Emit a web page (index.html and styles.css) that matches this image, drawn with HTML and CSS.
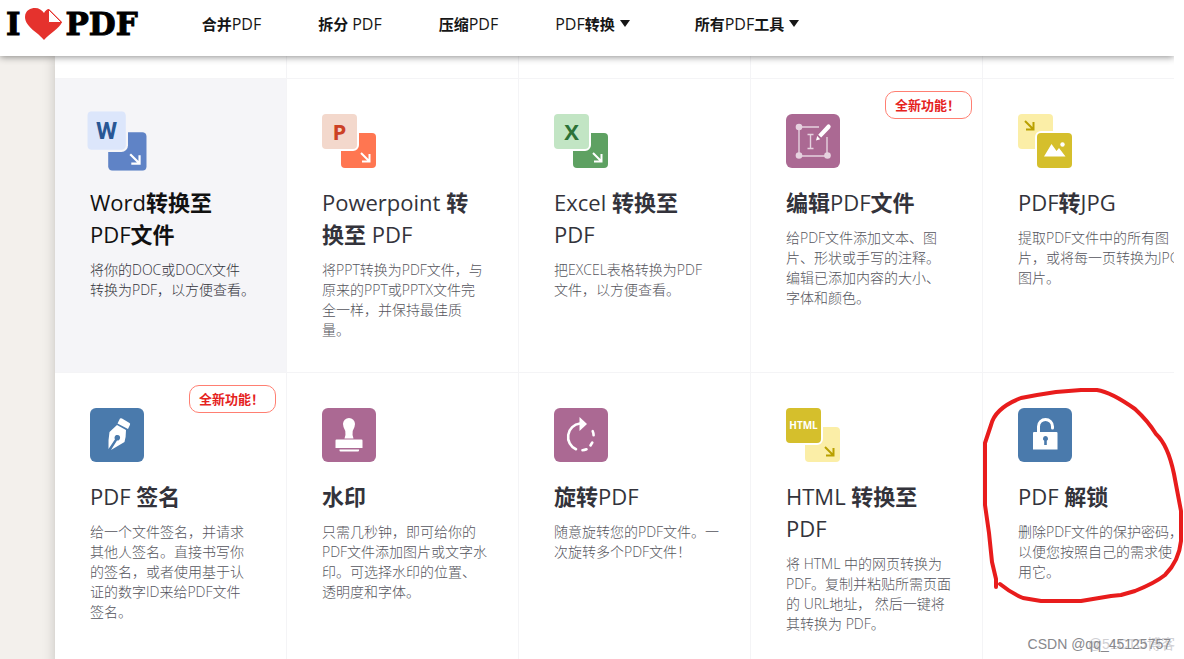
FILE: index.html
```html
<!DOCTYPE html>
<html lang="zh-CN">
<head>
<meta charset="utf-8">
<title>I love PDF</title>
<link rel="stylesheet" href="styles.css">
</head>
<body>
<div class="page">
  <header class="header">
    <a class="logo" href="#" aria-label="I love PDF">
      <span>I</span>
      <svg class="heart" viewBox="0 0 37 32" aria-hidden="true">
        <path fill="#e5322d" d="M19 32C14 25 0 19 0 9 0 2 6 0 10 0c4 0 7 2 9 5 1-2 3-4 5-4l13 13C35 20 24 26 19 32z"/>
        <path fill="#fff" stroke="#e5322d" d="M23.500 1.500 36.500 14.500h-13z"/>
      </svg>
      <span>PDF</span>
    </a>
    <nav class="nav">
      <a href="#">合并<span class="latin">PDF</span></a>
      <a href="#">拆分 <span class="latin">PDF</span></a>
      <a href="#">压缩<span class="latin">PDF</span></a>
      <button class="menu" type="button"><span><span class="latin">PDF</span>转换</span><i class="caret"></i></button>
      <button class="menu" type="button"><span>所有<span class="latin">PDF</span>工具</span><i class="caret"></i></button>
    </nav>
  </header>

  <main class="main">
    <div class="tools">
      <div class="previous"></div><div class="previous"></div><div class="previous"></div><div class="previous"></div><div class="previous"></div>

      <a class="card active" href="#">
        <svg class="icon" viewBox="0 0 54 54" aria-hidden="true">
          <rect x="19" y="19" width="35" height="35" rx="4" fill="#5f83c6"/>
          <rect class="cut" x="-2" y="-2" width="39" height="39" rx="6"/>
          <rect width="35" height="35" rx="4" fill="#dce6fb"/>
          <text class="letter narrow" x="17.500" y="25" fill="#285795">W</text>
          <path class="arrow" stroke="#fff" d="M39 39l8 8M47.500 40v7.500H40"/>
        </svg>
        <h2><span class="latin">Word</span>转换至<br><span class="latin">PDF</span>文件</h2>
        <p>将你的DOC或DOCX文件<br>转换为PDF，以方便查看。</p>
      </a>

      <a class="card" href="#">
        <svg class="icon" viewBox="0 0 54 54" aria-hidden="true">
          <rect x="19" y="19" width="35" height="35" rx="4" fill="#ff7651"/>
          <rect class="cut" x="-2" y="-2" width="39" height="39" rx="6"/>
          <rect width="35" height="35" rx="4" fill="#f3d8cc"/>
          <text class="letter" x="17.500" y="26" fill="#cc4125">P</text>
          <path class="arrow" stroke="#fff" d="M39 39l8 8M47.500 40v7.500H40"/>
        </svg>
        <h2><span class="latin">Powerpoint</span> 转<br>换至 <span class="latin">PDF</span></h2>
        <p>将PPT转换为PDF文件，与<br>原来的PPT或PPTX文件完<br>全一样，并保持最佳质<br>量。</p>
      </a>

      <a class="card" href="#">
        <svg class="icon" viewBox="0 0 54 54" aria-hidden="true">
          <rect x="19" y="19" width="35" height="35" rx="4" fill="#5ea162"/>
          <rect class="cut" x="-2" y="-2" width="39" height="39" rx="6"/>
          <rect width="35" height="35" rx="4" fill="#c2e5c4"/>
          <text class="letter" x="17.500" y="26" fill="#2c7237">X</text>
          <path class="arrow" stroke="#fff" d="M39 39l8 8M47.500 40v7.500H40"/>
        </svg>
        <h2><span class="latin">Excel</span> 转换至<br><span class="latin">PDF</span></h2>
        <p>把EXCEL表格转换为PDF<br>文件，以方便查看。</p>
      </a>

      <a class="card" href="#">
        <span class="badge">全新功能！</span>
        <svg class="icon" viewBox="0 0 54 54" aria-hidden="true">
          <rect width="54" height="54" rx="6" fill="#ab6993"/>
          <path fill="none" stroke="#e6d2df" stroke-width="1.400" d="M33 13H13v29h28V23"/>
          <g fill="#e6d2df"><circle cx="13" cy="13" r="3.300"/><circle cx="13" cy="41.500" r="3.300"/><circle cx="41.500" cy="41.500" r="3.300"/></g>
          <path fill="none" stroke="#e6d2df" stroke-width="1.400" d="M21.500 20.500h6M24.500 20.500v14M21.500 34.500h6"/>
          <path fill="#fff" d="M30 26.500l1.200-4.500 3 3.200zM32.200 20.700l8.700-9.500q1.500-1.600 3.100-.2 1.500 1.600.1 3.200l-8.900 9.400z"/>
        </svg>
        <h2>编辑<span class="latin">PDF</span>文件</h2>
        <p>给PDF文件添加文本、图<br>片、形状或手写的注释。<br>编辑已添加内容的大小、<br>字体和颜色。</p>
      </a>

      <a class="card" href="#">
        <svg class="icon" viewBox="0 0 54 54" aria-hidden="true">
          <rect width="35" height="35" rx="4" fill="#fbeea7"/>
          <rect class="cut" x="17" y="17" width="39" height="39" rx="6"/>
          <rect x="19" y="19" width="35" height="35" rx="4" fill="#d5bf2c"/>
          <path class="arrow" stroke="#b9a000" d="M7 7l8 8M15.500 8v7.500H8"/>
          <path fill="#fff" d="M26 42.500l7.500-12.500 5 7 2.500-3 6.500 8.500z"/><circle cx="44.500" cy="30.500" r="2.200" fill="#fff"/>
        </svg>
        <h2><span class="latin">PDF</span>转<span class="latin">JPG</span></h2>
        <p>提取PDF文件中的所有图<br>片，或将每一页转换为JPG<br>图片。</p>
      </a>

      <a class="card" href="#">
        <span class="badge">全新功能！</span>
        <svg class="icon" viewBox="0 0 54 54" aria-hidden="true">
          <rect width="54" height="54" rx="6" fill="#4a7aac"/>
          <path fill="#fff" d="M30 10.500q1-.6 2 0l7.500 4.500q1 .7.500 1.800L38 21 27.500 15.500z"/>
          <path fill="#fff" d="M27 17l9 5q0 7-1.500 12L21 42l6-9.500a2.800 2.800 0 1 0-2-1.200L18.500 41Q18 32 19.500 24z"/>
        </svg>
        <h2><span class="latin">PDF</span> 签名</h2>
        <p>给一个文件签名，并请求<br>其他人签名。直接书写你<br>的签名，或者使用基于认<br>证的数字ID来给PDF文件<br>签名。</p>
      </a>

      <a class="card" href="#">
        <svg class="icon" viewBox="0 0 54 54" aria-hidden="true">
          <rect width="54" height="54" rx="6" fill="#ab6993"/>
          <path fill="#fff" d="M22.500 30.500q1.500-4 .8-7.500-2.300-4-2.300-7a6 6 0 0 1 12 0q0 3-2.300 7-.7 3.500.8 7.500zM14.500 31.500h25q1 0 1 1V40h-27v-7.500q0-1 1-1zM17.500 41.500h19.500v1q0 1-1 1H18.500q-1 0-1-1z"/>
        </svg>
        <h2>水印</h2>
        <p>只需几秒钟，即可给你的<br>PDF文件添加图片或文字水<br>印。可选择水印的位置、<br>透明度和字体。</p>
      </a>

      <a class="card" href="#">
        <svg class="icon" viewBox="0 0 54 54" aria-hidden="true">
          <rect width="54" height="54" rx="6" fill="#ab6993"/>
          <path fill="none" stroke="#fff" stroke-width="2.600" stroke-linecap="round" d="M26 15.500A13.500 13.500 0 0 0 22 41.200M28.500 42.300q2-.1 4-1M36.500 37.500l1.800-3M39.600 27.200q0-2-.9-4"/>
          <path fill="#fff" d="M25.500 9l7.500 7-7.500 7z"/>
        </svg>
        <h2>旋转<span class="latin">PDF</span></h2>
        <p>随意旋转您的PDF文件。一<br>次旋转多个PDF文件！</p>
      </a>

      <a class="card" href="#">
        <svg class="icon" viewBox="0 0 54 54" aria-hidden="true">
          <rect x="19" y="19" width="35" height="35" rx="4" fill="#fbeea7"/>
          <rect class="cut" x="-2" y="-2" width="39" height="39" rx="6"/>
          <rect width="35" height="35" rx="4" fill="#d5bf2c"/>
          <text class="word" x="17.500" y="21" fill="#fff">HTML</text>
          <path class="arrow" stroke="#b9a000" d="M39 39l8 8M47.500 40v7.500H40"/>
        </svg>
        <h2><span class="latin">HTML</span> 转换至<br><span class="latin">PDF</span></h2>
        <p>将 HTML 中的网页转换为<br>PDF。复制并粘贴所需页面<br>的 URL地址， 然后一键将<br>其转换为 PDF。</p>
      </a>

      <a class="card" href="#">
        <svg class="icon" viewBox="0 0 54 54" aria-hidden="true">
          <rect width="54" height="54" rx="6" fill="#4a7aac"/>
          <path fill="none" stroke="#fff" stroke-width="3" stroke-linecap="round" d="M20.500 25v-6.500a7 7 0 0 1 14 0V20"/>
          <path fill="#fff" d="M16 24h22.500q1 0 1 1v16.500H15V25q0-1 1-1z"/>
          <path fill="#4a7aac" d="M27.500 28a2.600 2.600 0 0 1 1.300 4.800V37h-2.600v-4.200a2.600 2.600 0 0 1 1.300-4.800z"/>
        </svg>
        <h2><span class="latin">PDF</span> 解锁</h2>
        <p>删除PDF文件的保护密码，<br>以便您按照自己的需求使<br>用它。</p>
      </a>
    </div>
  </main>
</div>

<svg class="marker" viewBox="0 0 202 222" aria-hidden="true">
  <path d="M15 204V196L11 179 8 150 4 122 4 60 10 42Q14 25 40 15L56 12 75 9 100 7H116Q130 9 154 26Q167 38 175 51Q187 62 193 91L200 128V158Q198 178 184 192Q174 200 154 208L140 212 130 213 100 218H60L42 215Q30 210 19 201"/>
</svg>
<div class="watermark back">@51CTO博客</div>
<div class="watermark">CSDN @qq_45125757</div>
</body>
</html>
```
FILE: styles.css
```css
* { box-sizing: border-box; }

body {
  margin: 0;
  height: 100vh;
  overflow: hidden;
  position: relative;
  background: #fff;
  font-family: "Open Sans", "Noto Sans CJK SC", sans-serif;
  color: #33333b;
}

a { color: inherit; text-decoration: none; }

.page {
  display: flex;
  flex-direction: column;
  height: 100%;
  margin-right: 10px;
  overflow: hidden;
}

.header {
  display: flex;
  flex: none;
  align-items: center;
  gap: 64px;
  height: 56px;
  padding: 0 6px 9px;
  background: #fff;
  box-shadow: 0 1px 7px rgba(0, 0, 0, 0.45);
  z-index: 1;
}

.logo {
  display: flex;
  align-items: center;
  gap: 4px;
  font: bold 31px/40px "DejaVu Serif", serif;
  color: #000;
  -webkit-text-stroke: 1px #000;
}

.heart { width: 37px; height: 32px; }

.nav {
  display: flex;
  align-items: center;
  gap: 57px;
  font-size: 15px;
  font-weight: 700;
  line-height: 24px;
  color: #161616;
  white-space: nowrap;
}

.nav .latin { font-size: 16px; font-weight: 400; }

.menu {
  display: flex;
  align-items: center;
  gap: 5px;
  margin-right: 8px;
  padding: 0;
  border: 0;
  background: none;
  font: inherit;
  color: inherit;
}

.caret {
  border: 5px solid transparent;
  border-top: 7px solid #161616;
  border-bottom: 0;
}

.main {
  flex: 1;
  min-height: 0;
  padding-left: 55px;
  background: #f3f0ec;
}

.tools {
  display: grid;
  grid-template-columns: repeat(5, 1fr);
  margin-right: -41px;
  background: #fff;
  box-shadow: 0 0 12px rgba(0, 0, 0, 0.2);
}

.previous {
  height: 23px;
  border-right: 1px solid #f4f4f6;
  border-bottom: 1px solid #f4f4f6;
}

.card {
  --card-bg: #fff;
  position: relative;
  min-height: 294px;
  padding: 35px 20px 31px 35px;
  border-right: 1px solid #f4f4f6;
  border-bottom: 1px solid #f4f4f6;
  background: var(--card-bg);
  white-space: nowrap;
}

.card.active { --card-bg: #f5f5f8; color: #111; }
.active .icon { transform: scale(1.1); }

.icon {
  display: block;
  width: 54px;
  height: 54px;
  margin-bottom: 18px;
}

.cut { fill: var(--card-bg); }
.arrow { fill: none; stroke-width: 2; }

.letter {
  font: bold 22px "Open Sans", sans-serif;
  text-anchor: middle;
}

.letter.narrow { font-family: Roboto, sans-serif; }

.word {
  font: bold 10px "Open Sans", sans-serif;
  text-anchor: middle;
}

h2 {
  margin: 0 0 10px;
  font-size: 22px;
  font-weight: 700;
  line-height: 32px;
}

h2 .latin { font-weight: 500; }

p {
  margin: 0;
  font-size: 14px;
  font-weight: 300;
  line-height: 20px;
  color: #55555d;
}

.active p { color: #33333b; }

.badge {
  position: absolute;
  top: 12px;
  right: 10px;
  width: 87px;
  padding: 0 9px;
  border: 1px solid #ff7f72;
  border-radius: 10px;
  font-size: 13px;
  font-weight: 700;
  line-height: 26px;
  color: #e5221d;
}

.marker {
  position: absolute;
  top: 383px;
  right: 1px;
  width: 202px;
  height: 222px;
  fill: none;
  stroke: #e81c1c;
  stroke-width: 4;
  stroke-linecap: round;
  stroke-linejoin: round;
}

.watermark {
  position: absolute;
  right: 13px;
  bottom: 5px;
  font: 14px/20px "Liberation Sans", "Noto Sans CJK SC", sans-serif;
  color: #88888c;
  white-space: nowrap;
}

.watermark.back { right: 9px; color: #d0d0d4; }
```
